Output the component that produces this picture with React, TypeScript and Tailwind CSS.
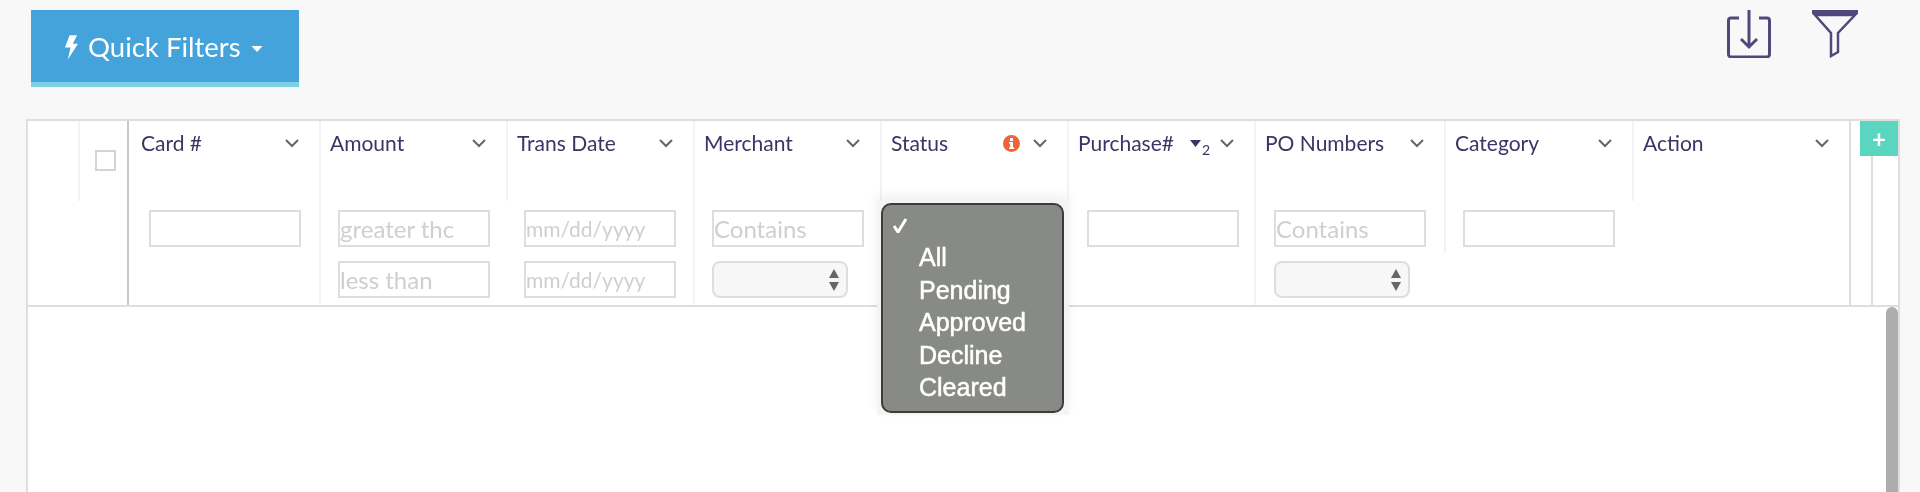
import React from 'react';

interface Column {
  label: string;
  width: string;
  rule: string;
  pad: string;
  inputs: React.ReactNode;
}

const Box = ({ placeholder, small }: { placeholder?: string; small?: boolean }) => (
  <input
    readOnly
    placeholder={placeholder}
    className={`w-[152px] h-[37px] border-2 border-[#dedede] bg-white outline-none placeholder:text-[#cfcfcf] ${
      small ? 'text-[21px]' : 'text-[24px]'
    }`}
  />
);

const FakeSelect = () => (
  <div className="w-[136px] h-[37px] rounded-[8px] border-2 border-[#dedede] bg-[#f7f7f7] flex items-center justify-end pr-[6px]">
    <svg width="12" height="24" viewBox="0 0 12 24" fill="#666666">
      <path d="M6 1l5 9H1z" />
      <path d="M6 23l5-9H1z" />
    </svg>
  </div>
);

const columns: Column[] = [
  { label: 'Card #', width: 'w-[190px]', rule: 'none', pad: 'pl-[20px]', inputs: <Box /> },
  {
    label: 'Amount',
    width: 'w-[187px]',
    rule: 'full',
    pad: 'pl-[19px]',
    inputs: (
      <>
        <Box placeholder="greater thc" />
        <Box placeholder="less than" />
      </>
    ),
  },
  {
    label: 'Trans Date',
    width: 'w-[187px]',
    rule: 'header',
    pad: 'pl-[18px]',
    inputs: (
      <>
        <Box placeholder="mm/dd/yyyy" small />
        <Box placeholder="mm/dd/yyyy" small />
      </>
    ),
  },
  {
    label: 'Merchant',
    width: 'w-[187px]',
    rule: 'full',
    pad: 'pl-[19px]',
    inputs: (
      <>
        <Box placeholder="Contains" />
        <FakeSelect />
      </>
    ),
  },
  { label: 'Status', width: 'w-[187px]', rule: 'full', pad: 'pl-[19px]', inputs: null },
  { label: 'Purchase#', width: 'w-[187px]', rule: 'header', pad: 'pl-[20px]', inputs: <Box /> },
  {
    label: 'PO Numbers',
    width: 'w-[190px]',
    rule: 'full',
    pad: 'pl-[20px]',
    inputs: (
      <>
        <Box placeholder="Contains" />
        <FakeSelect />
      </>
    ),
  },
  { label: 'Category', width: 'w-[188px]', rule: 'mid', pad: 'pl-[19px]', inputs: <Box /> },
  { label: 'Action', width: 'w-[217px]', rule: 'header', pad: 'pl-[19px]', inputs: null },
];

const Chevron = () => (
  <svg width="14" height="9" viewBox="0 0 14 9" fill="none" stroke="#666666" strokeWidth="2">
    <path d="M1 1l6 6 6-6" />
  </svg>
);

const InfoDot = () => (
  <svg width="17" height="17" viewBox="0 0 17 17" className="mr-[13px]">
    <circle cx="8.5" cy="8.5" r="8.5" fill="#f0623a" />
    <rect x="7" y="3" width="3" height="3" fill="#ffffff" />
    <path d="M6 7h4v5.5h1.2V14H6v-1.5h1.2V8.5H6z" fill="#ffffff" />
  </svg>
);

const SortMark = () => (
  <div className="flex items-start h-[24px] mr-[10px] text-[14px] leading-none text-[#3a3564]">
    <svg width="11" height="7" viewBox="0 0 11 7" fill="#3a3564" className="mt-[9px]">
      <path d="M0 0h11L5.5 7z" />
    </svg>
    <span className="mt-[12px] ml-[1px]">2</span>
  </div>
);

const HeaderCell = ({ col }: { col: Column }) => (
  <div
    className={`h-[80px] pr-[20px] pt-[10px] ${
      col.rule === 'none' ? 'pl-[12px]' : 'pl-[9px] border-l-2 border-[#f3f3f3]'
    }`}
  >
    <div className="h-[24px] flex items-center">
      <span className="text-[21px] text-[#3a3564] flex-1">{col.label}</span>
      {col.label === 'Status' && <InfoDot />}
      {col.label === 'Purchase#' && <SortMark />}
      <Chevron />
    </div>
  </div>
);

const FilterCell = ({ col }: { col: Column }) => (
  <div className="flex-1 relative">
    {col.rule === 'full' && <div className="absolute left-0 top-0 bottom-0 border-l-2 border-[#f3f3f3]" />}
    {col.rule === 'mid' && <div className="absolute left-0 top-0 h-[52px] border-l-2 border-[#f3f3f3]" />}
    <div className={`pt-[9px] ${col.pad} flex flex-col gap-[14px]`}>{col.inputs}</div>
  </div>
);

const StatusMenu = () => (
  <div className="absolute left-[-3px] top-[80px] w-[192px] h-[214px] bg-[#f4f4f4] shadow-[0_-6px_12px_rgba(0,0,0,0.06)] pt-[2px] pl-[4px]">
    <div className="w-[183px] h-[210px] rounded-[10px] border-2 border-[#3c3c3c] bg-[#888a86] text-white font-['Liberation_Sans',sans-serif] text-[25px] leading-[32.5px] [-webkit-text-stroke:0.5px_white] pt-[5px] pl-[36px] relative">
      <svg width="17" height="15" viewBox="0 0 17 15" fill="none" stroke="#ffffff" strokeWidth="3" className="absolute left-[9px] top-[13px]">
        <path d="M2 8l4 6L14 1" />
      </svg>
      <div className="h-[31px]" />
      <div>All</div>
      <div>Pending</div>
      <div>Approved</div>
      <div>Decline</div>
      <div>Cleared</div>
    </div>
  </div>
);

export default function App() {
  return (
    <div className="h-[492px] overflow-hidden bg-[#f8f8f8] flex flex-col font-['Lato',sans-serif] blur-[0.5px]">
      {/* toolbar */}
      <div className="h-[119px] flex items-start justify-between pt-[10px] pl-[31px] pr-[62px]">
        <button className="w-[268px] h-[77px] bg-[#45a3dc] border-b-[5px] border-[#7ad2e3] text-white text-[27.5px] flex items-center pl-[33px] pt-[2px] gap-[10px]">
          <svg width="14" height="25" viewBox="0 0 15 26" fill="#ffffff">
            <path d="M6 0h8L9.5 9H15L4 26l3-13H1z" />
          </svg>
          <span>Quick Filters</span>
          <svg width="12" height="6" viewBox="0 0 13 7" fill="#ffffff" className="mt-[3px]">
            <path d="M0 0h13L6.5 7z" />
          </svg>
        </button>
        <div className="flex gap-[41px]">
          <svg width="44" height="48" viewBox="0 0 44 48" fill="none" stroke="#4e4a7c" strokeWidth="3">
            <path d="M12 8H4a2.5 2.5 0 0 0-2.5 2.5v34A2.5 2.5 0 0 0 4 47h36a2.5 2.5 0 0 0 2.5-2.5v-34A2.5 2.5 0 0 0 40 8h-8" />
            <path d="M22 0v37M14 29l8 8 8-8" />
          </svg>
          <svg width="46" height="48" viewBox="0 0 46 48" fill="none" stroke="#4e4a7c" strokeWidth="2.5">
            <path d="M0 2h46" strokeWidth="4" />
            <path d="M3 5h40L26 23v19l-7 4V23z" />
          </svg>
        </div>
      </div>

      {/* table */}
      <div className="flex-1 ml-[26px] mr-[20px] border-2 border-b-0 border-[#dedede] bg-white flex flex-col relative">
        <div className="h-[186px] border-b-2 border-[#dedede] flex">
          <div className="w-[52px] h-[80px] border-r-2 border-[#f3f3f3]" />
          <div className="w-[49px] border-r-2 border-[#c8c8c8] pl-[15px] pt-[29px]">
            <div className="w-[21px] h-[21px] border-2 border-[#d4d4d4] bg-white" />
          </div>
          {columns.map((col) => (
            <div key={col.label} className={`${col.width} flex flex-col relative`}>
              <HeaderCell col={col} />
              <FilterCell col={col} />
              {col.label === 'Status' && <StatusMenu />}
            </div>
          ))}
          <div className="w-[22px] border-l-2 border-[#dedede]" />
          <div className="flex-1 border-l-2 border-[#dedede]" />
        </div>
        <div className="absolute right-0 top-0 w-[38px] h-[35px] bg-[#5ad5bf] flex items-center justify-center">
          <span className="text-white text-[24px] leading-none font-bold">+</span>
        </div>
        <div className="flex-1 flex justify-end">
          <div className="w-[12px] bg-[#adadad] rounded-t-[6px]" />
        </div>
      </div>
    </div>
  );
}
